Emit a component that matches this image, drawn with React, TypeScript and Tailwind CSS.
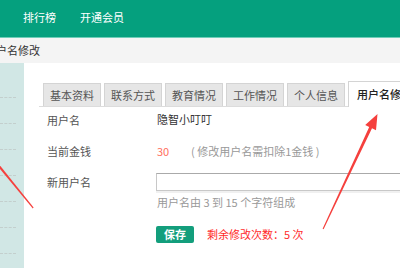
const tabs = ["基本资料", "联系方式", "教育情况", "工作情况", "个人信息"];

function Arrows() {
    return (
        <svg
            className="pointer-events-none absolute left-0 top-0"
            width="400"
            height="268"
            viewBox="0 0 400 268"
        >
            {/* left arrow tail */}
            <polygon points="-10,157 -8,155.5 33.6,207.6 32.8,208.4" fill="#f5403d" />
            {/* right arrow pointing at the active tab */}
            <polygon
                points="377.5,114 376,130.2 372,128.2 323.6,229.2 322.6,228.8 369.2,127 365.2,125"
                fill="#f5403d"
            />
        </svg>
    );
}

export default function App() {
    return (
        <div className="relative h-[268px] w-[400px] overflow-hidden bg-white font-['Noto_Sans_CJK_SC','Noto_Sans',sans-serif]">
            {/* top nav */}
            <div className="flex h-[38px] items-center gap-[24px] border-b border-[#6fcdb8] bg-[#05a07e] pb-[3px] pl-[23px] text-[11px] text-white">
                <span>排行榜</span>
                <span>开通会员</span>
            </div>

            {/* breadcrumb */}
            <div className="flex h-[25px] items-center bg-[#f4f4f4] pb-[1px] text-[11px] text-[#333]">
                <span className="ml-[-15px]">用户名修改</span>
            </div>

            <div className="flex h-[205px]">
                {/* sidebar */}
                <div className="w-[24px] shrink-0 bg-[#d1e7e5] pr-[8px]">
                    <div className="h-[35px] border-b border-dashed border-[#c3cfcd]" />
                    {[0, 1, 2, 3, 4, 5].map((i) => (
                        <div key={i} className="h-[26px] border-b border-dashed border-[#c3cfcd]" />
                    ))}
                </div>

                {/* main */}
                <div className="flex-1 pl-[15px] pt-[19px]">
                    <div className="flex h-[25px] items-end gap-[3px] border-b border-[#dcdcdc] pl-[4px]">
                        {tabs.map((t) => (
                            <div
                                key={t}
                                className="flex h-[23px] w-[58px] shrink-0 items-center justify-center border border-b-0 border-[#d4d4d4] bg-[#e6e6e6] text-[11px] text-[#555]"
                            >
                                {t}
                            </div>
                        ))}
                        <div className="mb-[-1px] flex h-[26px] w-[70px] shrink-0 items-center border border-b-0 border-[#d4d4d4] bg-white pl-[8px] text-[11px] font-medium whitespace-nowrap text-[#222]">
                            用户名修改
                        </div>
                    </div>

                    <div className="pl-[8px] text-[11px]">
                        <div className="flex h-[28px] items-center pb-[1px]">
                            <span className="w-[110px] text-[#555]">用户名</span>
                            <span className="mt-[-3px] text-[#333]">隐智小叮叮</span>
                        </div>
                        <div className="flex h-[32px] items-center">
                            <span className="w-[110px] text-[#555]">当前金钱</span>
                            <span className="w-[34px] text-[#ff6f5e]">30</span>
                            <span className="text-[#999]">( 修改用户名需扣除1金钱 )</span>
                        </div>
                        <div className="flex h-[30px] items-center">
                            <span className="w-[109px] text-[#555]">新用户名</span>
                            <input className="h-[18px] w-[260px] shrink-0 border border-t-[#aaa] border-[#c8c8c8] shadow-[0_2px_0_#f0f0f0] outline-none" />
                        </div>
                        <div className="ml-[110px] mt-[-4px] leading-[18px] text-[#999]">
                            用户名由 3 到 15 个字符组成
                        </div>
                        <div className="ml-[109px] mt-[15px] flex items-center gap-[13px]">
                            <button className="flex h-[17px] w-[38px] items-center justify-center rounded-[2px] bg-[#139e7c] text-[11px] font-bold text-white">
                                保存
                            </button>
                            <span className="text-[#ff2b2b]">剩余修改次数：5 次</span>
                        </div>
                    </div>
                </div>
            </div>

            <Arrows />
        </div>
    );
}
